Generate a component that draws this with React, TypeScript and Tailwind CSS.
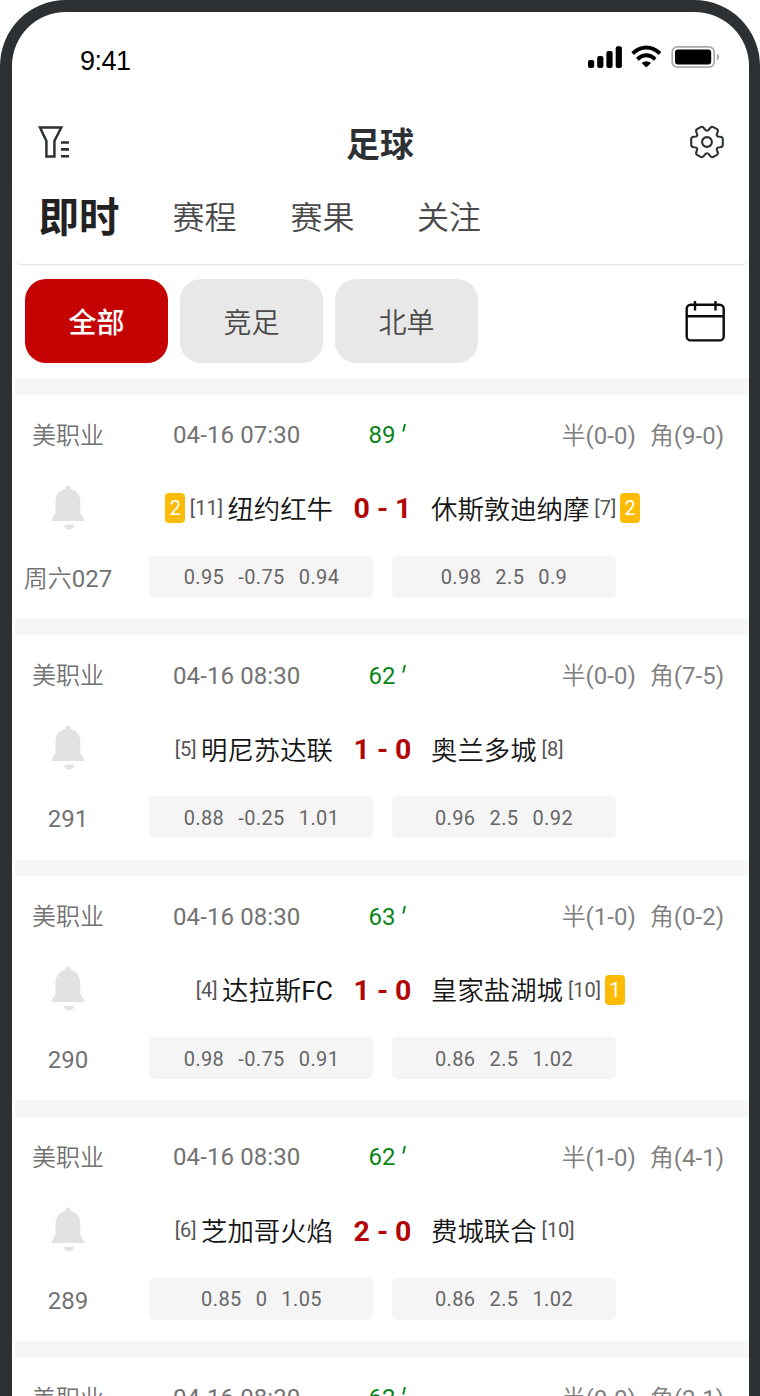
import React from "react";

type Match = {
  id: string;
  date: string;
  minute: string;
  half: string;
  corner: string;
  home: string;
  homeRank: string;
  homeCards?: string;
  away: string;
  awayRank: string;
  awayCards?: string;
  score: [string, string];
  handicap: string[];
  total: string[];
};

const matches: Match[] = [
  { id: "周六027", date: "04-16 07:30", minute: "89", half: "0-0", corner: "9-0", home: "纽约红牛", homeRank: "11", homeCards: "2", away: "休斯敦迪纳摩", awayRank: "7", awayCards: "2", score: ["0", "1"], handicap: ["0.95", "-0.75", "0.94"], total: ["0.98", "2.5", "0.9"] },
  { id: "291", date: "04-16 08:30", minute: "62", half: "0-0", corner: "7-5", home: "明尼苏达联", homeRank: "5", away: "奥兰多城", awayRank: "8", score: ["1", "0"], handicap: ["0.88", "-0.25", "1.01"], total: ["0.96", "2.5", "0.92"] },
  { id: "290", date: "04-16 08:30", minute: "63", half: "1-0", corner: "0-2", home: "达拉斯FC", homeRank: "4", away: "皇家盐湖城", awayRank: "10", awayCards: "1", score: ["1", "0"], handicap: ["0.98", "-0.75", "0.91"], total: ["0.86", "2.5", "1.02"] },
  { id: "289", date: "04-16 08:30", minute: "62", half: "1-0", corner: "4-1", home: "芝加哥火焰", homeRank: "6", away: "费城联合", awayRank: "10", score: ["2", "0"], handicap: ["0.85", "0", "1.05"], total: ["0.86", "2.5", "1.02"] },
];

const partialMatch = { date: "04-16 08:30", minute: "62", half: "0-0", corner: "2-1" };

function StatusIcons() {
  return (
    <svg width="134" height="26" viewBox="586 44 134 26" className="block">
      <g fill="#000">
        <rect x="588" y="60" width="6.2" height="8" rx="2" />
        <rect x="597.2" y="56" width="6.2" height="12" rx="2" />
        <rect x="606.4" y="51" width="6.2" height="17" rx="2" />
        <rect x="615.7" y="46.2" width="6.2" height="21.8" rx="2" />
        <path d="M646.3 67.6 L641.6 62.9 Q646.3 59.4 651 62.9 Z" />
      </g>
      <g fill="none" stroke="#000" strokeWidth="3.9">
        <path d="M632.6 53.4 Q646.3 41.8 660 53.4" />
        <path d="M637.3 59.2 Q646.3 51.4 655.3 59.2" />
      </g>
      <rect x="672.2" y="46.8" width="42" height="20.4" rx="5.2" fill="#fff" stroke="#a9a9a9" strokeWidth="1.7" />
      <rect x="675" y="49.4" width="36.2" height="15.2" rx="3" fill="#000" />
      <path d="M716.8 53.5 Q719.2 54.6 719.2 57 Q719.2 59.4 716.8 60.5 Z" fill="#a9a9a9" />
    </svg>
  );
}

function FilterIcon() {
  return (
    <svg width="34" height="34" viewBox="37 124.5 34 34" fill="none" stroke="#2d3134" strokeWidth="2.5" className="block">
      <path d="M40 127 H61.3 L54.4 140.5 V156 H46.4 V140.5 Z" />
      <path d="M61 142 H69 M61 148.9 H69 M61 155.8 H69" strokeWidth="2.6" />
    </svg>
  );
}

function GearIcon() {
  return (
    <svg width="36" height="34" viewBox="-18 -17 36 34" fill="none" stroke="#2d3134" strokeWidth="2.1" strokeLinejoin="round" className="block">
      <path d="M-5.8 -15.1 C-4.2 -15.6 -3.4 -14.5 -2.5 -13.2 Q0 -9.4 2.5 -13.2 C3.4 -14.5 4.2 -15.6 5.8 -15.1 L10 -12.8 C11.4 -12 11.1 -10.8 10.4 -9.3 Q8.2 -5.2 12.9 -5.2 C14.8 -5.1 15.8 -4.8 15.8 -3 V3 C15.8 4.8 14.8 5.1 12.9 5.2 Q8.2 5.2 10.4 9.3 C11.1 10.8 11.4 12 10 12.8 L5.8 15.1 C4.2 15.6 3.4 14.5 2.5 13.2 Q0 9.4 -2.5 13.2 C-3.4 14.5 -4.2 15.6 -5.8 15.1 L-10 12.8 C-11.4 12 -11.1 10.8 -10.4 9.3 Q-8.2 5.2 -12.9 5.2 C-14.8 5.1 -15.8 4.8 -15.8 3 V-3 C-15.8 -4.8 -14.8 -5.1 -12.9 -5.2 Q-8.2 -5.2 -10.4 -9.3 C-11.1 -10.8 -11.4 -12 -10 -12.8 Z" />
      <circle r="4.9" />
    </svg>
  );
}

function CalendarIcon() {
  return (
    <svg width="40" height="42" viewBox="685 300 40 42" fill="none" stroke="#0c0c0c" strokeWidth="2.4" className="block">
      <rect x="686.7" y="304.8" width="37" height="35.6" rx="4" />
      <path d="M686.7 316.3 H723.7 M695 301 V310.5 M715.5 301 V310.5" />
    </svg>
  );
}

function BellIcon() {
  return (
    <svg width="34" height="46" viewBox="0 0 34 46" fill="#e2e2e2" className="block">
      <path d="M17 0.5 C18.8 0.5 19.8 1.8 19.8 4 C26 5.5 29.3 10.5 29.3 16.5 V28 L33.6 35 Q33.8 36 32.8 36 H1.2 Q0.2 36 0.4 35 L4.5 28 V16.5 C4.5 10.5 8 5.5 14.2 4 C14.2 1.8 15.2 0.5 17 0.5 Z" />
      <path d="M13 39.8 H23 Q22.5 44.5 18 44.5 Q13.5 44.5 13 39.8 Z" />
    </svg>
  );
}

function Cards({ n }: { n: string }) {
  return (
    <span className="flex h-[30px] w-5 shrink-0 items-center justify-center rounded bg-[#fdbb05] text-xl leading-none text-white">{n}</span>
  );
}

function Odds({ values }: { values: string[] }) {
  return (
    <div className="flex h-[42px] w-56 items-center justify-center gap-[14px] rounded-[5px] bg-[#f5f5f5] pl-px pt-px text-xl tracking-[0.4px] text-[#666]">
      {values.map((v, i) => (
        <span key={i}>{v}</span>
      ))}
    </div>
  );
}

function Band() {
  return <div className="ml-[3px] h-[16.6px] shrink-0 bg-[#f5f6f8]" />;
}

function InfoRow({ m }: { m: { date: string; minute: string; half: string; corner: string } }) {
  return (
    <div className="flex h-[81px] items-center pr-[25px] text-2xl text-[#727272]">
      <span className="w-28 pt-px text-center">美职业</span>
      <span className="ml-[49px] w-[195.5px] tracking-[0.1px]">{m.date}</span>
      <span className="flex items-center text-[#0a8518]">
        {m.minute}
        <svg width="6" height="12" viewBox="0 0 6 12" className="mb-3 ml-[6px]" fill="none" stroke="#0a8518" strokeWidth="1.9">
          <path d="M4 1 L2.2 8.5" />
        </svg>
      </span>
      <span className="ml-auto flex gap-[14px] pt-px text-[#808080]">
        <span>半({m.half})</span>
        <span>角({m.corner})</span>
      </span>
    </div>
  );
}

function MatchCard({ m }: { m: Match }) {
  return (
    <section className="h-[240.8px] shrink-0">
      <Band />
      <InfoRow m={m} />
      <div className="flex h-[65px] items-center text-[26.4px] text-[#151515]">
        <div className="mr-[2px] flex w-28 shrink-0 justify-center pb-px">
          <BellIcon />
        </div>
        <div className="flex w-[207px] items-center justify-end gap-[4.5px]">
          {m.homeCards && <Cards n={m.homeCards} />}
          <span className="text-xl text-[#555]">[{m.homeRank}]</span>
          <span className="whitespace-nowrap pt-[5px]">{m.home}</span>
        </div>
        <div className="flex w-[99px] items-center justify-center gap-[7px] pt-[3px] text-[28.5px] font-bold text-[#b20505]">
          <span>{m.score[0]}</span>
          <span>-</span>
          <span>{m.score[1]}</span>
        </div>
        <div className="-ml-px flex items-center gap-1">
          <span className="mr-px whitespace-nowrap pt-[5px]">{m.away}</span>
          <span className="text-xl text-[#555]">[{m.awayRank}]</span>
          {m.awayCards && <Cards n={m.awayCards} />}
        </div>
      </div>
      <div className="flex h-[76px] items-center text-2xl text-[#727272]">
        <span className="w-28 text-center">{m.id}</span>
        <div className="flex gap-[18.5px] pb-1 pl-[25px]">
          <Odds values={m.handicap} />
          <Odds values={m.total} />
        </div>
      </div>
    </section>
  );
}

export default function App() {
  return (
    <div className="h-[1396px] w-[760px] overflow-hidden bg-white font-['Roboto','Noto_Sans_CJK_SC_DemiLight','Noto_Sans_CJK_SC',sans-serif]">
      <div className="flex h-[1480px] flex-col overflow-hidden rounded-[66px] border-[12px] border-r-[11px] border-[#2d3134] bg-white">
        <header className="h-[252px] shrink-0">
          <div className="flex h-[90px] items-center justify-between pl-[68px] pr-[29px]">
            <span className="pt-2 font-['Liberation_Sans',sans-serif] text-[27px] leading-none tracking-[-0.5px] text-black">9:41</span>
            <StatusIcons />
          </div>
          <div className="flex h-[79px] items-center justify-between pl-[25px] pr-[24px]">
            <FilterIcon />
            <h1 className="pt-[3px] font-['Noto_Sans_CJK_SC',sans-serif] text-[34px] leading-[40px] font-bold text-[#2d3134]">足球</h1>
            <GearIcon />
          </div>
          <nav className="ml-[3px] flex h-[83px] items-center rounded-b-md pb-[9px] pl-[23.5px] text-[32px] text-[#4a4a4a] shadow-[0_2px_2px_-1px_rgba(0,0,0,0.12)]">
            <span className="w-[134px] pt-px font-['Roboto','Noto_Sans_CJK_SC',sans-serif] text-[40.5px] font-bold text-[#222]">即时</span>
            <span className="w-[118px]">赛程</span>
            <span className="w-[126.5px]">赛果</span>
            <span>关注</span>
          </nav>
        </header>
        <div className="flex h-[114px] shrink-0 items-center justify-between pl-[13px] pr-[24px]">
          <div className="flex gap-3 text-[28px] text-[#4a4a4a]">
            <button className="h-[84px] w-[143px] rounded-[21px] bg-[#c60303] pt-[6px] font-['Roboto','Noto_Sans_CJK_SC',sans-serif] font-medium text-white">全部</button>
            <button className="h-[84px] w-[143px] rounded-[21px] bg-[#e8e8e8] pt-[6px]">竞足</button>
            <button className="h-[84px] w-[143px] rounded-[21px] bg-[#e8e8e8] pt-[6px]">北单</button>
          </div>
          <CalendarIcon />
        </div>
        {matches.map((m) => (
          <MatchCard key={m.id} m={m} />
        ))}
        <Band />
        <InfoRow m={partialMatch} />
      </div>
    </div>
  );
}
